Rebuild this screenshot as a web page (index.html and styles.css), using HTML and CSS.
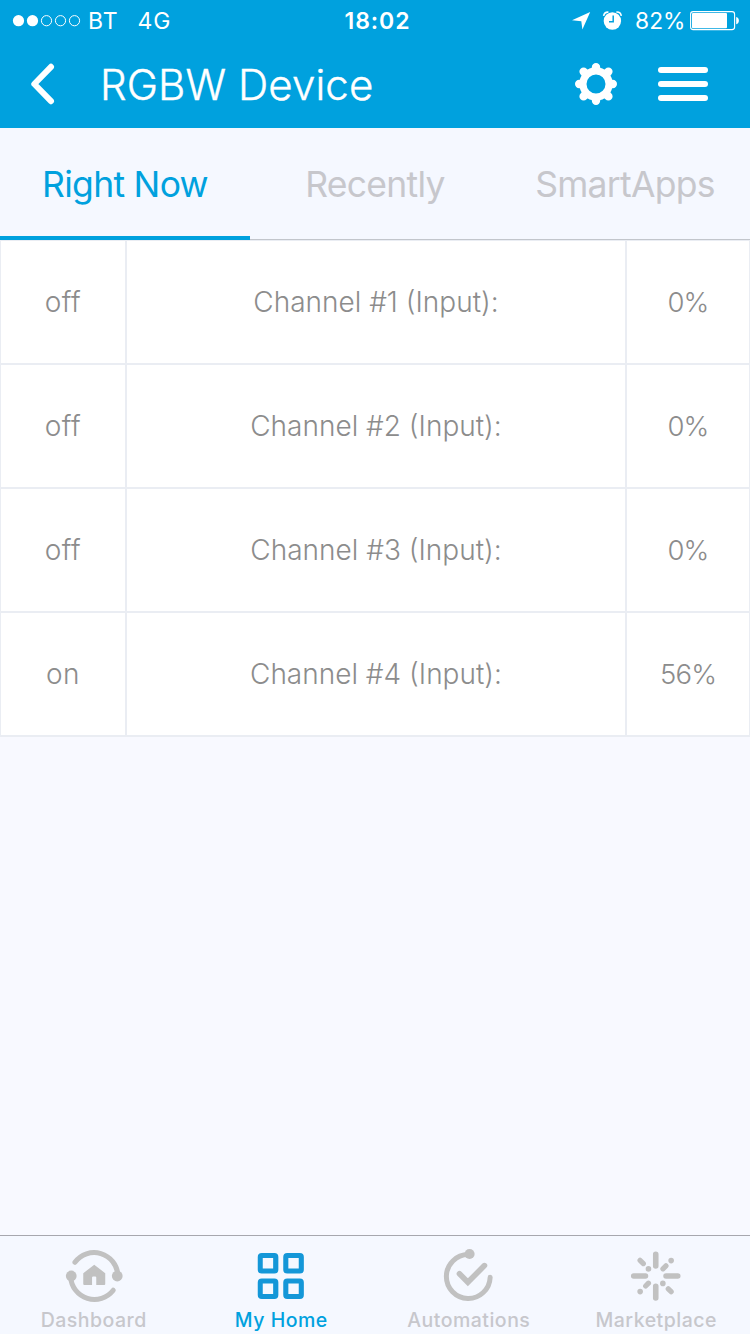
FILE: index.html
```
<!DOCTYPE html>
<html lang="en">
<head>
<meta charset="utf-8">
<title>RGBW Device</title>
<link rel="stylesheet" href="styles.css">
</head>
<body>
<div class="app">
  <header class="header">
    <div class="status">
      <div class="status-left">
        <svg class="signal" width="69" height="14" viewBox="0 0 69 14">
          <g fill="#fff"><circle cx="6.5" cy="6.7" r="5.6"/><circle cx="20.5" cy="6.7" r="5.6"/></g>
          <g fill="none" stroke="#fff" stroke-width="1"><circle cx="34.5" cy="6.7" r="5.1"/><circle cx="48.5" cy="6.7" r="5.1"/><circle cx="62.5" cy="6.7" r="5.1"/></g>
        </svg>
        <span class="carrier">BT</span>
        <span class="network">4G</span>
      </div>
      <span class="clock">18:02</span>
      <div class="status-right">
        <svg width="20" height="20" viewBox="571 11 20 20"><path d="M590.2 12 L582.4 29.6 L581.3 21.2 L572 20.2 Z" fill="#fff"/></svg>
        <svg class="alarm" width="22" height="20" viewBox="602 10.5 22 20">
          <circle cx="612.4" cy="20.5" r="8.7" fill="#fff"/>
          <path d="M603.6 15.3 A4.6 4.6 0 0 1 608.4 11.6 M616.4 11.6 A4.6 4.6 0 0 1 621.3 15.3" fill="none" stroke="#fff" stroke-width="1.6"/>
          <path d="M613.2 15 V21.3 H609" fill="none" stroke="#00a1de" stroke-width="1.5"/>
        </svg>
        <span class="percent">82%</span>
        <svg class="battery" width="50" height="20" viewBox="690 11 50 20">
          <rect x="690.6" y="11.6" width="44" height="18" rx="2.6" fill="none" stroke="#fff" stroke-width="1.1"/>
          <rect x="692" y="13" width="35" height="15.2" rx="1" fill="#fff"/>
          <path d="M736.2 17 C739.8 17.6 739.8 23.6 736.2 24.2 Z" fill="#fff"/>
        </svg>
      </div>
    </div>
    <div class="navbar">
      <svg class="back" width="30" height="46" viewBox="28 61 30 46"><path d="M51 66.8 L34.3 84 L51 101.2" fill="none" stroke="#fff" stroke-width="6" stroke-linecap="round" stroke-linejoin="round"/></svg>
      <h1 class="title">RGBW Device</h1>
      <svg class="gear" width="44" height="44" viewBox="-22 -22 44 44">
        <circle r="13.1" fill="none" stroke="#fff" stroke-width="7.2"/>
        <path d="M0 -14.5V-16.8M0 14.5V16.8M-14.5 0H-16.8M14.5 0H16.8M10.3 10.3L12.4 12.4M-10.3 10.3L-12.4 12.4M10.3 -10.3L12.4 -12.4M-10.3 -10.3L-12.4 -12.4" stroke="#fff" stroke-width="8.4" stroke-linecap="round"/>
      </svg>
      <div class="menu"><i></i><i></i><i></i></div>
    </div>
  </header>

  <nav class="tabs">
    <a class="tab tab-active">Right Now</a>
    <a class="tab">Recently</a>
    <a class="tab">SmartApps</a>
  </nav>

  <main class="content">
    <div class="channels">
      <div class="cell state">off</div><div class="cell">Channel #1 (Input):</div><div class="cell value">0%</div>
      <div class="cell state">off</div><div class="cell">Channel #2 (Input):</div><div class="cell value">0%</div>
      <div class="cell state">off</div><div class="cell">Channel #3 (Input):</div><div class="cell value">0%</div>
      <div class="cell state">on</div><div class="cell">Channel #4 (Input):</div><div class="cell value">56%</div>
    </div>
  </main>

  <nav class="tabbar">
    <a class="item">
      <svg width="60" height="60" viewBox="63.75 1246 60 60">
        <g fill="none" stroke="#c1c1c1" stroke-width="5" stroke-linecap="round">
          <path d="M74.7 1262.3 A23.8 23.8 0 0 1 117.6 1275"/>
          <path d="M70.4 1277 A23.8 23.8 0 0 0 113 1290.2"/>
        </g>
        <g fill="#c1c1c1"><circle cx="117" cy="1276" r="5.4"/><circle cx="71" cy="1276" r="5.4"/>
        <path d="M94 1264.8 L105 1273.2 V1284 Q105 1285 104 1285 H96 V1277.5 Q96 1276.6 95 1276.6 H92.8 Q91.8 1276.6 91.8 1277.5 V1285 H84 Q83 1285 83 1284 V1273.2 Z"/></g>
      </svg>
      <span>Dashboard</span>
    </a>
    <a class="item item-active">
      <svg width="60" height="60" viewBox="251.25 1246 60 60">
        <path fill="#1497d8" fill-rule="evenodd" d="M262 1253h12.6a4 4 0 0 1 4 4v12.6a4 4 0 0 1 -4 4h-12.6a4 4 0 0 1 -4 -4v-12.6a4 4 0 0 1 4 -4zM263 1258v10.4h10.4v-10.4z
        M287.5 1253h12.6a4 4 0 0 1 4 4v12.6a4 4 0 0 1 -4 4h-12.6a4 4 0 0 1 -4 -4v-12.6a4 4 0 0 1 4 -4zM288.6 1258v10.4h10.4v-10.4z
        M262 1278.5h12.6a4 4 0 0 1 4 4v12.6a4 4 0 0 1 -4 4h-12.6a4 4 0 0 1 -4 -4v-12.6a4 4 0 0 1 4 -4zM263 1283.6v10.4h10.4v-10.4z
        M287.5 1278.5h12.6a4 4 0 0 1 4 4v12.6a4 4 0 0 1 -4 4h-12.6a4 4 0 0 1 -4 -4v-12.6a4 4 0 0 1 4 -4zM288.6 1283.6v10.4h10.4v-10.4z"/>
      </svg>
      <span>My Home</span>
    </a>
    <a class="item">
      <svg width="60" height="60" viewBox="438.75 1246 60 60">
        <g fill="none" stroke="#c1c1c1" stroke-width="5" stroke-linecap="round" stroke-linejoin="round">
          <path d="M468 1254.6 A21.9 21.9 0 1 0 489.9 1277.3"/>
          <path d="M459.2 1273.8 L467.6 1282.2 L484.2 1265.6" stroke-width="5.6" stroke-linejoin="miter"/>
        </g>
        <circle cx="469.3" cy="1254" r="5.1" fill="#c1c1c1"/>
      </svg>
      <span>Automations</span>
    </a>
    <a class="item">
      <svg width="60" height="60" viewBox="626.25 1246 60 60">
        <g stroke="#c1c1c1" stroke-linecap="round" fill="#c1c1c1">
          <path stroke-width="5.6" d="M656 1254.4V1266M656 1286.3V1298M634 1276H645.7M666.3 1276H678"/>
          <path stroke-width="5.2" d="M640.3 1260.3L643.6 1263.6M663.2 1268.8L666.2 1265.8M645.9 1286L648.7 1283.2M668.5 1288.8L671.4 1291.7"/>
          <g stroke="none"><circle cx="648.7" cy="1268.9" r="2.8"/><circle cx="671.4" cy="1260.6" r="2.8"/><circle cx="640.4" cy="1291.6" r="2.8"/><circle cx="663.1" cy="1283.4" r="2.8"/></g>
        </g>
      </svg>
      <span>Marketplace</span>
    </a>
  </nav>
</div>
</body>
</html>
```
FILE: styles.css
```
* { box-sizing: border-box; }
body { margin: 0; font-family: Inter, "Liberation Sans", sans-serif; }
svg { display: block; flex: none; }
.app { width: 750px; height: 1334px; display: flex; flex-direction: column; background: #f8f9ff; overflow: hidden; }

.header { height: 128px; background: #00a1de; color: #fff; }
.status { height: 41px; display: grid; grid-template-columns: 1fr auto 1fr; align-items: center; font-size: 23px; line-height: 41px; white-space: nowrap; }
.status-left, .status-right { display: flex; align-items: center; padding-top: 1px; line-height: 40px; }
.status-left { padding-left: 12px; }
.status-right { justify-content: flex-end; padding-right: 10px; }
.carrier { margin-left: 7px; letter-spacing: 0.9px; }
.network { margin-left: 19px; letter-spacing: 0.9px; }
.clock { font-weight: 600; letter-spacing: 0.9px; margin-left: 5px; padding-top: 1px; line-height: 40px; }
.alarm { margin-left: 11px; }
.percent { margin-left: 11px; margin-right: 4.5px; letter-spacing: 0; font-size: 22.8px; }

.navbar { height: 85px; display: flex; align-items: center; padding: 0 42px 0 28px; }
.title { margin: 2px auto 0 42px; font-size: 42px; line-height: 50px; font-weight: 300; letter-spacing: 0.1px; -webkit-text-stroke: 0.4px #fff; white-space: nowrap; }
.menu { display: flex; flex-direction: column; gap: 8px; width: 50px; margin-left: 40px; }
.menu i { height: 6px; border-radius: 3px; background: #fff; }

.tabs { height: 112px; display: flex; background: #f5f8ff; box-shadow: inset 0 -1px #c2c6cc; }
.tab { width: 250px; display: flex; justify-content: center; padding-top: 35px; font-size: 35.5px; line-height: 43px; letter-spacing: -0.7px; color: #c7c7cc; white-space: nowrap; }
.tab-active { color: #00a1de; border-bottom: 4px solid #00a1de; }

.content { flex: 1; }
.channels { display: grid; grid-template-columns: 126px 500px 124px; grid-auto-rows: 124px; border-bottom: 1px solid #eaedf3; }
.cell { display: flex; align-items: center; justify-content: center; background: #fff; border: 1px solid #eaedf3; color: #8c8c8c; font-size: 28px; font-weight: 300; letter-spacing: 0; white-space: nowrap; }
.state { letter-spacing: 0.4px; }
.value { font-size: 27.5px; letter-spacing: -0.8px; }

.tabbar { height: 99px; display: flex; background: #f5f8ff; border-top: 1px solid #a7a7ae; }
.item { width: 187.5px; padding-top: 10px; display: flex; flex-direction: column; align-items: center; color: #c7c7cc; font-size: 19.5px; line-height: 24px; font-weight: 500; letter-spacing: 0.5px; white-space: nowrap; }
.item span { margin-top: 2px; }
.item-active { color: #00a1de; }
```
